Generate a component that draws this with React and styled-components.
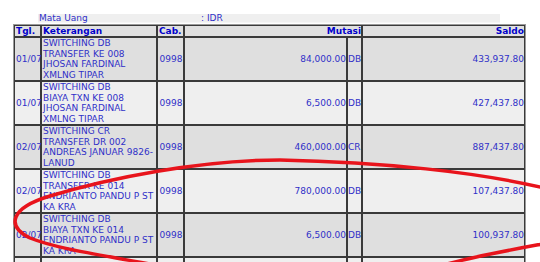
import React from "react";
import styled, { createGlobalStyle } from "styled-components";

const Global = createGlobalStyle`
  html, body {
    margin: 0;
    padding: 0;
    background: #fff;
  }
  body {
    font-family: "DejaVu Sans", Verdana, sans-serif;
    font-size: 9px;
    color: #3030c8;
  }
`;

const Page = styled.div`
  position: relative;
  width: 540px;
  height: 262px;
  overflow: hidden;
  padding-top: 14px;
  box-sizing: border-box;
`;

const InfoBar = styled.div`
  display: flex;
  margin-left: 38px;
  width: 462px;
  height: 9px;
  line-height: 9px;
  background: #efefef;
  border-bottom: 1px solid #f6f6f6;
  padding-left: 1px;
  box-sizing: border-box;

  .label { width: 162px; }
`;

const Ledger = styled.table`
  margin: 1px 0 0 13px;
  width: 513px;
  table-layout: fixed;
  border-collapse: separate;
  border-spacing: 0;
  border: 1px solid #9a9a9a;
`;

const Th = styled.th`
  box-sizing: border-box;
  height: 12px;
  padding: 0 0 0 1px;
  border: 1px solid #3a3a3a;
  background: #e0e0e0;
  color: #0000cc;
  font-weight: bold;
  line-height: 10px;
  text-align: ${(p) => (p.$right ? "right" : "left")};
  white-space: nowrap;
`;

const Td = styled.td`
  box-sizing: border-box;
  height: 44px;
  padding: 0 0 0 ${(p) => (p.$tight ? "0" : "1px")};
  border: 1px solid #3a3a3a;
  background: ${(p) => (p.$odd ? "#dfdfdf" : "#efefef")};
  line-height: 10.5px;
  vertical-align: middle;
  text-align: ${(p) => p.$align || "left"};
  white-space: nowrap;
`;

const Scribble = styled.svg`
  position: absolute;
  left: 0;
  top: 0;
  pointer-events: none;
`;

const ROWS = [
  {
    tgl: "01/07",
    ket: ["SWITCHING DB", "TRANSFER KE 008", "JHOSAN FARDINAL", "XMLNG TIPAR"],
    mut: "84,000.00",
    dc: "DB",
    saldo: "433,937.80",
  },
  {
    tgl: "01/07",
    ket: ["SWITCHING DB", "BIAYA TXN KE 008", "JHOSAN FARDINAL", "XMLNG TIPAR"],
    mut: "6,500.00",
    dc: "DB",
    saldo: "427,437.80",
  },
  {
    tgl: "02/07",
    ket: ["SWITCHING CR", "TRANSFER DR 002", "ANDREAS JANUAR 9826-", "LANUD"],
    mut: "460,000.00",
    dc: "CR",
    saldo: "887,437.80",
  },
  {
    tgl: "02/07",
    ket: ["SWITCHING DB", "TRANSFER KE 014", "ENDRIANTO PANDU P ST", "KA KRA"],
    mut: "780,000.00",
    dc: "DB",
    saldo: "107,437.80",
  },
  {
    tgl: "02/07",
    ket: ["SWITCHING DB", "BIAYA TXN KE 014", "ENDRIANTO PANDU P ST", "KA KRA"],
    mut: "6,500.00",
    dc: "DB",
    saldo: "100,937.80",
  },
];

export default function App() {
  return (
    <>
      <Global />
      <Page>
        <InfoBar>
          <span className="label">Mata Uang</span>
          <span>: IDR</span>
        </InfoBar>
        <Ledger>
          <colgroup>
            <col style={{ width: 27 }} />
            <col style={{ width: 116 }} />
            <col style={{ width: 27 }} />
            <col style={{ width: 163 }} />
            <col style={{ width: 15 }} />
            <col style={{ width: 163 }} />
          </colgroup>
          <thead>
            <tr>
              <Th>Tgl.</Th>
              <Th>Keterangan</Th>
              <Th>Cab.</Th>
              <Th colSpan={2} $right>Mutasi</Th>
              <Th $right>Saldo</Th>
            </tr>
          </thead>
          <tbody>
            {ROWS.map((r, i) => (
              <tr key={i}>
                <Td $odd={i % 2 === 0}>{r.tgl}</Td>
                <Td $odd={i % 2 === 0}>
                  {r.ket.map((line, j) => (
                    <React.Fragment key={j}>
                      {line}
                      {j < r.ket.length - 1 && <br />}
                    </React.Fragment>
                  ))}
                </Td>
                <Td $odd={i % 2 === 0} $align="center">0998</Td>
                <Td $odd={i % 2 === 0} $align="right">{r.mut}</Td>
                <Td $odd={i % 2 === 0} $tight>{r.dc}</Td>
                <Td $odd={i % 2 === 0} $align="right">{r.saldo}</Td>
              </tr>
            ))}
            <tr>
              <Td />
              <Td />
              <Td />
              <Td />
              <Td />
              <Td />
            </tr>
          </tbody>
        </Ledger>
        <Scribble width="540" height="262" viewBox="0 0 540 262">
          <path
            d="M 548 189 C 480 172, 380 162, 280 160 C 200 160, 110 178, 50 196 C 10 208, 6 226, 30 238 C 60 250, 110 256, 160 266"
            fill="none"
            stroke="#e8141c"
            strokeWidth="3.5"
            strokeLinecap="round"
          />
          <path
            d="M 548 243 C 510 250, 470 257, 440 266"
            fill="none"
            stroke="#e8141c"
            strokeWidth="3.5"
            strokeLinecap="round"
          />
        </Scribble>
      </Page>
    </>
  );
}
